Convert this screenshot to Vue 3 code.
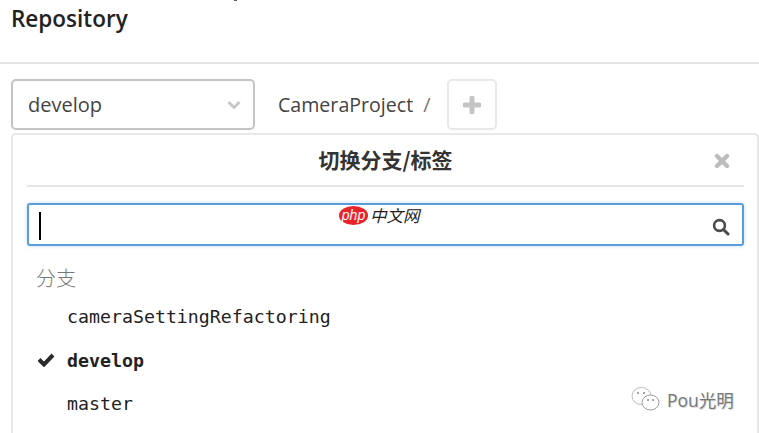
<script setup>
const branches = [
  { name: 'cameraSettingRefactoring', active: false },
  { name: 'develop', active: true },
  { name: 'master', active: false },
]
</script>

<template>
  <div class="page">
    <span class="clipped-tail"></span>
    <h1 class="title">Repository</h1>
    <div class="rule"></div>
    <div class="toolbar">
      <div class="select">
        <span>develop</span>
        <svg class="chev" width="14" height="10" viewBox="0 0 14 10"><path d="M1.5 2 7 7.5 12.5 2" fill="none" stroke="#c8c8c8" stroke-width="3"/></svg>
      </div>
      <span class="crumb">CameraProject</span>
      <span class="slash">/</span>
      <div class="plus">
        <svg width="18" height="18" viewBox="0 0 18 18"><path d="M9 2v14M2 9h14" stroke="#c4c4c4" stroke-width="5" stroke-linecap="round" fill="none"/></svg>
      </div>
    </div>
    <div class="panel">
      <div class="panel-head">
        <span class="panel-title">切换分支/标签</span>
        <svg class="close" width="16" height="16" viewBox="0 0 16 16"><path d="M3 3l10 10M13 3 3 13" stroke="#bdbdbd" stroke-width="4.4" stroke-linecap="round" fill="none"/></svg>
      </div>
      <div class="search">
        <span class="caret"></span>
        <svg class="glass" width="18" height="18" viewBox="0 0 18 18"><circle cx="7.5" cy="7.5" r="5.4" fill="none" stroke="#4a4a4a" stroke-width="2.6"/><path d="M11.5 11.5 16 16" stroke="#4a4a4a" stroke-width="3" stroke-linecap="round"/></svg>
      </div>
      <div class="group">分支</div>
      <ul class="list">
        <li v-for="b in branches" :key="b.name" class="item" :class="{ active: b.active }">
          <svg v-if="b.active" class="check" width="18" height="15" viewBox="0 0 18 15"><path d="M2 7.5 7 12.5 16 3" fill="none" stroke="#2b2b2b" stroke-width="4"/></svg>
          <span>{{ b.name }}</span>
        </li>
      </ul>
    </div>

    <div class="php-mark">
      <span class="php-oval">php</span>
      <span class="php-text">中文网</span>
    </div>
    <div class="wechat-mark">
      <svg width="30" height="26" viewBox="0 0 30 26">
        <ellipse cx="10.5" cy="10" rx="9.5" ry="8.5" fill="#fff" stroke="#bdbdbd"/>
        <ellipse cx="19.5" cy="16.5" rx="8.5" ry="7.5" fill="#fff" stroke="#9a9a9a"/>
        <circle cx="7" cy="7" r="1" fill="#888"/><circle cx="13" cy="7" r="1" fill="#888"/>
        <circle cx="17" cy="14" r="1" fill="#888"/><circle cx="22" cy="14" r="1" fill="#888"/>
      </svg>
      <span>Pou光明</span>
    </div>
  </div>
</template>

<style>
html, body { margin: 0; background: #fff; }
</style>

<style scoped>
.page {
  position: relative;
  width: 759px;
  height: 433px;
  overflow: hidden;
  background: #fff;
  color: #333;
  font-family: "Open Sans", "Noto Sans CJK SC", sans-serif;
}
.clipped-tail { position: absolute; left: 234px; top: 0; width: 3px; height: 1px; background: #6a5a50; }
.title {
  margin: 0;
  padding: 3px 0 0 11px;
  height: 62px;
  box-sizing: border-box;
  font-size: 22.5px;
  line-height: 32px;
  font-weight: 600;
  color: #222;
}
.rule { height: 2px; background: #e5e5e5; }
.toolbar {
  display: flex;
  align-items: center;
  padding: 15px 0 0 11px;
}
.select {
  box-sizing: border-box;
  width: 244px;
  height: 51px;
  border: 2px solid #c4c4c4;
  border-radius: 5px;
  padding: 0 12px 0 15px;
  display: flex;
  align-items: center;
  justify-content: space-between;
  font-size: 20px;
  color: #444;
}
.crumb { margin-left: 23px; font-size: 19.6px; color: #444; }
.slash { margin-left: 10px; font-size: 20px; color: #777; }
.plus {
  box-sizing: border-box;
  width: 50px;
  height: 51px;
  margin-left: 16px;
  border: 2px solid #e8e8e8;
  border-radius: 5px;
  display: flex;
  align-items: center;
  justify-content: center;
}
.panel {
  box-sizing: border-box;
  margin: 3px 0 0 11px;
  padding: 0 15px 0 14px;
  height: 320px;
  border: 2px solid #e8e8e8;
  border-bottom: 0;
  border-radius: 5px 5px 0 0;
}
.panel-head {
  position: relative;
  height: 52px;
  display: flex;
  align-items: center;
  justify-content: center;
  border-bottom: 2px solid #e5e5e5;
  box-sizing: border-box;
  width: 717px;
}
.panel-title { font-size: 21px; font-weight: 700; color: #333; margin-top: -2px; font-family: "Noto Sans CJK SC", sans-serif; }
.close { position: absolute; right: 14px; top: 18px; }
.search {
  box-sizing: border-box;
  position: relative;
  width: 717px;
  height: 43px;
  margin-top: 16px;
  border: 2px solid #5b9dd9;
  border-radius: 3px;
  box-shadow: 0 0 4px rgba(91, 157, 217, 0.35);
}
.caret { position: absolute; left: 10px; top: 7px; width: 2px; height: 28px; background: #000; }
.glass { position: absolute; right: 12px; top: 13px; }
.group {
  margin: 19px 0 0 9px;
  font-size: 20px;
  line-height: 26px;
  color: #777;
  font-family: "Noto Sans CJK SC", sans-serif;
  font-weight: 300;
}
.list { list-style: none; margin: 4px 0 0; padding: 0; }
.item {
  position: relative;
  height: 43.5px;
  line-height: 43.5px;
  padding-left: 40px;
  font-family: "DejaVu Sans Mono", monospace;
  font-size: 18.25px;
  color: #222;
}
.item.active { font-weight: 700; }
.check { position: absolute; left: 10px; top: 13px; }
.php-mark {
  position: absolute;
  left: 339px;
  top: 206px;
  display: flex;
  align-items: center;
}
.php-oval {
  width: 29px;
  height: 19px;
  border-radius: 50%;
  background: #e8232a;
  color: #fff;
  font: italic 14px/18px "Liberation Sans", sans-serif;
  text-align: center;
}
.php-text { margin-left: 2px; font-size: 16.5px; line-height: 19px; color: #222; font-family: "Noto Sans CJK SC", sans-serif; font-style: italic; }
.wechat-mark {
  position: absolute;
  left: 631px;
  top: 386px;
  display: flex;
  align-items: center;
  gap: 6px;
  font-size: 17.5px;
  color: #777;
  text-shadow: 1px 1px 0 #ddd;
}
</style>
